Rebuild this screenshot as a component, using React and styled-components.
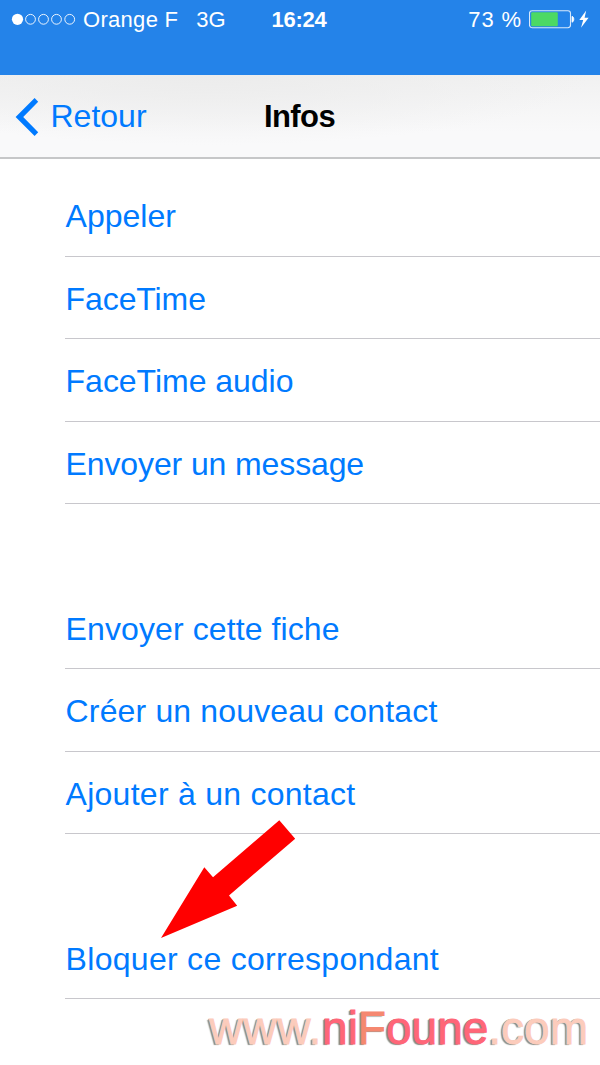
import React from "react";
import styled, { createGlobalStyle } from "styled-components";

const groups = [
    [
        { label: "Appeler", spacing: 0 },
        { label: "FaceTime", spacing: -0.1 },
        { label: "FaceTime audio", spacing: -0.03 },
        { label: "Envoyer un message", spacing: -0.12 },
    ],
    [
        { label: "Envoyer cette fiche", spacing: 0.1 },
        { label: "Créer un nouveau contact", spacing: 0.15 },
        { label: "Ajouter à un contact", spacing: 0.26 },
    ],
    [{ label: "Bloquer ce correspondant", spacing: 0.29 }],
];

function Signal() {
    return (
        <svg width="66" height="14" viewBox="0 0 66 14">
            <circle cx="7.5" cy="6.3" r="5.6" fill="#fff" />
            {[20.5, 33.5, 46.5, 59.7].map((cx) => (
                <circle key={cx} cx={cx} cy="6.3" r="4.9" fill="none" stroke="#fff" strokeWidth="0.9" />
            ))}
        </svg>
    );
}

function Battery() {
    return (
        <svg width="61" height="20" viewBox="0 0 61 20">
            <rect x="0.5" y="0.7" width="41" height="17" rx="2.6" fill="none" stroke="#d8e9fc" strokeWidth="1.1" />
            <rect x="2.2" y="2.3" width="26.6" height="14" rx="1" fill="#4cd964" />
            <path d="M43 6.3c2.4 0.6 2.4 5.2 0 6z" fill="#fff" stroke="#fff" strokeWidth="0.8" />
            <path d="M57.2 0.6L50.3 10H54.2L52 17.8L59.6 7.8H55.6Z" fill="#fff" />
        </svg>
    );
}

function App() {
    return (
        <Screen>
            <GlobalStyle />
            <StatusBar>
                <Carrier>
                    <Signal />
                    <span>Orange F</span>
                    <Network>3G</Network>
                </Carrier>
                <Time>16:24</Time>
                <Power>
                    <span>73 %</span>
                    <Battery />
                </Power>
            </StatusBar>
            <NavBar>
                <Back>
                    <svg width="24" height="40" viewBox="0 0 24 40">
                        <path d="M0.6 20L19.6 1L23.2 4.8L8.2 20L23.2 35.2L19.6 39Z" fill="#007aff" />
                    </svg>
                    Retour
                </Back>
                <Title>Infos</Title>
            </NavBar>
            <Content>
                {groups.map((rows, i) => (
                    <Group key={i}>
                        {rows.map((row) => (
                            <Row key={row.label} $spacing={row.spacing}>{row.label}</Row>
                        ))}
                    </Group>
                ))}
            </Content>
            <Footer>
                <Pale $spacing={0.7}>www.</Pale>
                <Pink>ni</Pink>
                <Coral>F</Coral>
                <Pink>oune</Pink>
                <Pale $spacing={0}>.com</Pale>
            </Footer>
            <Arrow width="136" height="120" viewBox="160 819 136 120">
                <path d="M161 938L204.3 867.3L213 877.2L279.3 820.3L295.2 838.8L229 895.5L237.2 905.8Z" fill="#f00" />
            </Arrow>
        </Screen>
    );
}

const GlobalStyle = createGlobalStyle`
body{
    margin: 0;
    background: #fff;
    font-family: "Liberation Sans", Arial, sans-serif;
}
`;

const Screen = styled.div`
position: relative;
width: 600px;
height: 1065px;
overflow: hidden;
background: #fff;
`;

const StatusBar = styled.div`
box-sizing: border-box;
height: 75px;
padding: 6px 10px 0 10px;
display: grid;
grid-template-columns: 1fr auto 1fr;
align-items: start;
background: #2483e9;
color: #fff;
font-size: 22px;
line-height: 27px;
`;

const Carrier = styled.div`
display: flex;
align-items: center;
letter-spacing: 0.3px;
span{
    margin-left: 7px;
}
`;

const Network = styled.div`
margin-left: 18px;
letter-spacing: 0;
`;

const Time = styled.div`
padding-right: 2px;
font-size: 22px;
font-weight: 700;
letter-spacing: -0.3px;
`;

const Power = styled.div`
display: flex;
justify-content: flex-end;
align-items: center;
gap: 7px;
letter-spacing: 0.9px;
`;

const NavBar = styled.div`
box-sizing: border-box;
height: 84px;
padding: 1px 15px 0;
display: grid;
grid-template-columns: 1fr auto 1fr;
align-items: center;
background: radial-gradient(ellipse 380px 70px at 210px 0, #ececec, rgba(236, 236, 236, 0)), linear-gradient(#f1f1f1, #f9f9fa 70%);
border-bottom: 2px solid #c6c7c8;
font-size: 32px;
`;

const Back = styled.div`
display: flex;
align-items: center;
gap: 11.5px;
color: #007aff;
`;

const Title = styled.div`
padding-right: 1px;
color: #000;
font-size: 31px;
font-weight: 700;
letter-spacing: -0.6px;
`;

const Content = styled.div`
padding: 15px 0 0 65px;
display: flex;
flex-direction: column;
gap: 82.5px;
`;

const Group = styled.div`
display: flex;
flex-direction: column;
`;

const Row = styled.div`
box-sizing: border-box;
height: 82.5px;
padding-left: 0.6px;
border-bottom: 1px solid #c8c7cc;
color: #007aff;
font-size: 32px;
line-height: 84px;
white-space: nowrap;
letter-spacing: ${(props) => props.$spacing}px;
`;

const Footer = styled.div`
padding: 3px 12px 0 0;
display: flex;
justify-content: flex-end;
font-size: 46px;
line-height: 52px;
text-shadow: -1px 0 0 #8b8d84, -2px 1px 1px #8b8d84;
-webkit-text-stroke-width: 1px;
`;

const Pale = styled.span`
color: #fcccbc;
letter-spacing: ${(props) => props.$spacing}px;
`;

const Pink = styled.span`
color: #ff6678;
`;

const Coral = styled.span`
color: #f58870;
`;

const Arrow = styled.svg`
position: absolute;
left: 160px;
top: 819px;
`;

export default App;
